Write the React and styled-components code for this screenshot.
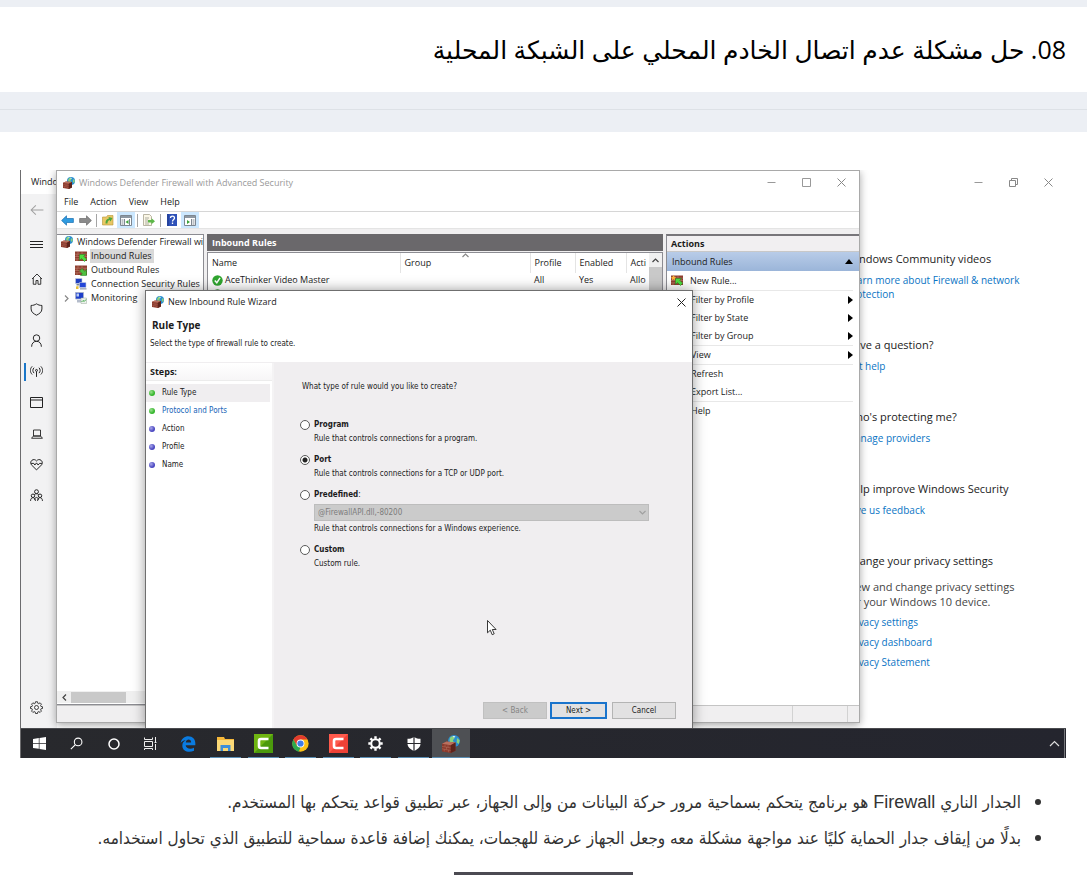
import React from "react";
import styled, { createGlobalStyle, css } from "styled-components";

const GlobalStyle = createGlobalStyle`
  *, *::before, *::after { box-sizing: border-box; }
  body { margin: 0; background: #fff; font-family: "DejaVu Sans", sans-serif; color: #000; }
  button, input, select { font: inherit; color: inherit; }
  h1, h2, h3, p, ul, ol { margin: 0; padding: 0; }
  ul, ol { list-style: none; }
  svg { display: block; flex: none; }
`;

const ui = '"Open Sans", "Noto Sans", sans-serif';
const dialogFont = '"DejaVu Sans Condensed", "DejaVu Sans", sans-serif';

/* ---------- article ---------- */

const Page = styled.div`
  direction: rtl;
  background: #fff;
`;
const TopStrip = styled.div`
  height: 7px;
  background: #eceff4;
`;
const Heading = styled.header`
  padding: 22px 21px 23px 20px;
  h1 {
    font-family: "Open Sans", "DejaVu Sans", sans-serif;
    font-size: 25px;
    line-height: 40px;
    font-weight: 400;
    white-space: nowrap;
  }
`;
const Divider = styled.div`
  height: 40px;
  padding-top: 17px;
  background: #eceff4;
  hr { margin: 0; border: 0; border-top: 1px solid #dde1e6; }
`;
const Article = styled.main`
  padding: 38px 21px 0 20px;
`;
const Notes = styled.ul`
  padding: 26px 0 0;
  color: #333;
  font-family: "DejaVu Sans Condensed", "DejaVu Sans", sans-serif;
  font-size: 17px;
  line-height: 36px;
  li {
    display: flex;
    align-items: center;
    gap: 14px;
    padding-right: 25px;
    height: 36px;
    white-space: nowrap;
  }
  li::before {
    content: "";
    width: 6px;
    height: 6px;
    border-radius: 50%;
    background: #333;
  }
  b { font: 400 18px/36px "Liberation Sans", sans-serif; }
`;
const NextFigure = styled.div`
  width: 179px;
  height: 3px;
  margin: 16px auto 0;
  background: #4b4a52;
`;

/* ---------- desktop ---------- */

const Desktop = styled.figure`
  direction: ltr;
  margin: 0;
  font-family: ${ui};
  font-size: 9px;
  line-height: 14px;
  color: #1b1b1b;
  border-left: 1px solid #6c6c6e;
  overflow: hidden;
`;
const Stage = styled.div`
  position: relative;
  height: 558px;
  overflow: hidden;
`;
const Security = styled.section`
  display: flex;
  flex-direction: column;
  height: 100%;
  background: #fff;
`;
const TitleBar = styled.div`
  display: flex;
  align-items: center;
  height: ${(p) => p.$h || 24}px;
  padding-left: ${(p) => p.$pad || 10}px;
  gap: 4px;
  color: ${(p) => (p.$muted ? "#9a9a9a" : "#1b1b1b")};
  white-space: nowrap;
`;
const WindowControls = styled.div`
  display: flex;
  margin-left: auto;
`;
const PlainButton = styled.button`
  display: flex;
  align-items: center;
  justify-content: center;
  padding: 0;
  border: 0;
  background: none;
`;
const ControlButton = styled(PlainButton)`
  width: ${(p) => p.$w || 35}px;
  height: 23px;
`;
const SecurityBody = styled.div`
  display: flex;
  flex: 1;
`;
const Sidebar = styled.nav`
  display: flex;
  flex-direction: column;
  width: 36px;
  background: #f2f2f3;
`;
const NavButton = styled(PlainButton)`
  height: ${(p) => p.$h || 31}px;
  padding-right: 7px;
  border-left: 2px solid transparent;
  ${(p) => p.$last && css`margin-top: auto;`}
  ${(p) =>
    p.$active &&
    css`
      background: linear-gradient(#1a76c8, #1a76c8) 1px center / 2px 18px no-repeat;
    `}
`;
const Help = styled.aside`
  display: flex;
  flex-direction: column;
  gap: 36px;
  width: 220px;
  margin-left: auto;
  padding-top: 57px;
`;
const HelpSection = styled.section`
  display: flex;
  flex-direction: column;
  align-items: flex-start;
  gap: 6px;
  h2 { font-size: 11px; line-height: 16px; font-weight: 400; }
  p { padding-top: 4px; font-size: 11px; line-height: 15px; color: #454545; }
  a { font-size: 10px; line-height: 14px; color: #0a74c4; text-decoration: none; }
`;

/* ---------- firewall console ---------- */

const Console = styled.section`
  position: absolute;
  left: 35px;
  top: 0;
  display: flex;
  flex-direction: column;
  width: 804px;
  height: 553px;
  background: #f0eff0;
  border: 1px solid #a9a9a9;
  box-shadow: 0 2px 8px rgba(0, 0, 0, 0.35);
`;
const WhiteBand = styled.div`
  background: #fff;
`;
const MenuBar = styled.div`
  display: flex;
  gap: 12px;
  height: 17px;
  padding-left: 7px;
  button { height: 16px; }
`;
const ToolBar = styled.div`
  display: flex;
  align-items: center;
  height: 18px;
  padding-left: 1px;
  border-top: 1px solid #d6d6d6;
  border-bottom: 1px solid #e4e4e4;
  background: #fff;
`;
const Tool = styled(PlainButton)`
  width: 18px;
  height: 16px;
  background: ${(p) => (p.$on ? "#cce8ff" : "none")};
`;
const ToolSep = styled.span`
  width: 1px;
  height: 13px;
  margin: 0 2px;
  background: #a5a5a5;
`;
const Panes = styled.div`
  display: flex;
  flex: 1;
  gap: 3px;
  min-height: 0;
  margin-top: 5px;
`;
const TreePane = styled.div`
  display: flex;
  flex-direction: column;
  width: 147px;
  background: #fff;
  border: 1px solid #8c8c92;
  border-left: 0;
  overflow: hidden;
`;
const TreeRow = styled.li`
  display: flex;
  align-items: center;
  gap: 4px;
  height: 14px;
  padding-left: ${(p) => p.$indent}px;
  white-space: nowrap;
  span { padding: 0 2px 0 1px; margin-left: -1px; background: ${(p) => (p.$on ? "#d9d9d9" : "none")}; }
`;
const Expander = styled.i`
  display: flex;
  width: 7px;
`;
const HScroll = styled.div`
  display: flex;
  align-items: center;
  height: 12px;
  margin: auto 0 1px;
  padding-left: 5px;
  background: #f0f0f0;
  gap: 4px;
  &::after { content: ""; width: 55px; height: 11px; background: #c9c9c9; }
`;
const ListPane = styled.div`
  display: flex;
  flex-direction: column;
  width: 456px;
  h2 {
    height: 17px;
    padding-left: 5px;
    line-height: 17px;
    font-size: 9px;
    color: #fff;
    background: #6a686b;
  }
`;
const ListBox = styled.div`
  display: flex;
  flex: 1;
  margin-top: 1px;
  border: 1px solid #8c8c92;
  background: #fff;
  overflow: hidden;
`;
const RuleTable = styled.table`
  flex: 1;
  align-self: flex-start;
  table-layout: fixed;
  border-collapse: collapse;
  width: 0;
  th, td { padding: 0 0 0 4px; text-align: left; font-weight: 400; white-space: nowrap; }
  th { height: 20px; border-right: 1px solid #e4e4e4; }
  th:last-child { border-right: 0; }
  td { height: 14px; }
`;
const SortHead = styled.div`
  position: relative;
  svg { position: absolute; right: 61px; top: -3px; }
`;
const RuleName = styled.div`
  display: flex;
  align-items: center;
  gap: 2px;
`;
const VScroll = styled.div`
  width: 13px;
  padding-top: 5px;
  background: linear-gradient(#f0f0f0 14px, #c9c9c9 14px);
  svg { margin: 0 auto; }
`;
const ActionsPane = styled.div`
  flex: 1;
  border-top: 2px solid #77757a;
  border-left: 1px solid #8c8c92;
  background: #fff;
  h2 {
    height: 16px;
    padding-left: 4px;
    font-size: 9px;
    line-height: 15px;
    background: #f1eff1;
    border-bottom: 1px solid #c8c8c8;
  }
`;
const ActionHeader = styled.button`
  display: flex;
  align-items: center;
  justify-content: space-between;
  width: 100%;
  height: 19px;
  padding: 0 6px 0 5px;
  border: 0;
  background: linear-gradient(#b8cce8, #9bb5d9);
`;
const ActionRow = styled.li`
  border-bottom: ${(p) => (p.$rule ? 1 : 0)}px solid #e8e8e8;
  margin-right: 6px;
  button {
    justify-content: flex-start;
    width: 100%;
    height: ${(p) => (p.$icon ? 19 : 18)}px;
    padding-left: ${(p) => (p.$icon ? 4 : 24)}px;
    gap: 7px;
  }
  svg:last-child:not(:first-child) { margin-left: auto; }
`;
const StatusBar = styled.div`
  display: flex;
  justify-content: flex-end;
  height: 17px;
  border-top: 1px solid #c4c4c4;
  span { width: 55px; border-left: 1px solid #d2d2d2; }
  span:last-child { width: 12px; }
`;

/* ---------- wizard dialog ---------- */

const Wizard = styled.form`
  position: absolute;
  left: 124px;
  top: 120px;
  display: flex;
  flex-direction: column;
  width: 548px;
  height: 438px;
  background: #fff;
  border: 1px solid #6f6f6f;
  border-bottom: 0;
  box-shadow: 0 0 12px rgba(0, 0, 0, 0.4);
  font-family: ${dialogFont};
  font-size: 8px;
`;
const WizardTitle = styled(TitleBar)`
  font-family: ${ui};
  font-size: 9px;
`;
const WizardIntro = styled.div`
  height: 49px;
  padding: 5px 4px 0;
  h2 { padding-left: 2px; font: 700 10px/14px ${ui}; }
  p { padding-top: 5px; }
`;
const WizardBody = styled.div`
  display: flex;
  flex: 1;
  border-top: 1px solid #f0eef0;
`;
const Steps = styled.div`
  width: 128px;
  border-right: 2px solid #f4f3f4;
  h3 {
    height: 18px;
    padding-left: 4px;
    margin-bottom: 3px;
    font: 700 9px/17px ${ui};
    border-bottom: 1px solid #ececec;
    background: linear-gradient(#fff, #f7f6f7);
  }
`;
const Step = styled.li`
  display: flex;
  align-items: center;
  gap: 7px;
  height: 18px;
  padding-left: 3px;
  margin-right: 2px;
  background: ${(p) => (p.$on ? "#f0eef0" : "none")};
  &::before {
    content: "";
    width: 6px;
    height: 6px;
    border-radius: 50%;
    background: radial-gradient(circle at 35% 35%, ${(p) => (p.$done ? "#9be08f, #35b52c" : "#a9a7ea, #4a47c0")} 60%);
  }
  a { color: #1765b8; text-decoration: none; }
`;
const Question = styled.div`
  display: flex;
  flex-direction: column;
  flex: 1;
  padding: 17px 16px 9px 28px;
  background: #f0eef0;
`;
const Options = styled.fieldset`
  display: flex;
  flex-direction: column;
  margin: 0;
  padding: 0;
  border: 0;
  legend { padding: 0; margin-bottom: 24px; }
`;
const Option = styled.div`
  margin-bottom: 8px;
  margin-left: -2px;
  label { display: flex; align-items: center; gap: 4px; font-weight: 700; }
  label span { font-weight: 400; margin-left: -4px; }
  input {
    appearance: none;
    width: 10px;
    height: 10px;
    margin: 0;
    border: 1px solid #5a5a5a;
    border-radius: 50%;
    background: #fff;
  }
  input:checked { background: radial-gradient(circle, #222 0 2px, #fff 3px); }
  p { padding-left: 14px; line-height: 13px; }
`;
const SelectBox = styled.div`
  position: relative;
  margin: 2px 27px 1px 14px;
  select {
    appearance: none;
    display: block;
    width: 100%;
    height: 17px;
    padding: 0 3px;
    border: 1px solid #bdbdbd;
    border-radius: 0;
    background: #cbcbcb;
    color: #7c7c7c;
    opacity: 1;
  }
  svg { position: absolute; right: 3px; top: 6px; }
`;
const Buttons = styled.div`
  display: flex;
  justify-content: flex-end;
  margin-top: auto;
  gap: 3px;
`;
const DialogButton = styled.button`
  width: ${(p) => (p.$primary ? 57 : 64)}px;
  height: 17px;
  padding: 0;
  border: ${(p) => (p.$primary ? "2px solid #1a74cc" : "1px solid #b4b4b4")};
  background: #e2e1e2;
  &:disabled { background: #cbcbcb; border-color: #c0c0c0; color: #858585; }
  &:last-child { margin-left: 2px; }
`;
const Pointer = styled.div`
  position: absolute;
  left: 466px;
  top: 450px;
`;

/* ---------- taskbar ---------- */

const TaskBar = styled.div`
  display: flex;
  height: 30px;
  background: linear-gradient(90deg, #28292d, #24252e);
  border-top: 1px solid #4a4b4f;
`;
const TaskGroup = styled.div`
  display: flex;
  width: ${(p) => p.$w}px;
`;
const Task = styled(PlainButton)`
  flex: 1;
  color: #fff;
  background: ${(p) => (p.$active ? "#4e5054" : "none")};
  ${(p) =>
    p.$open &&
    css`
      background-image: linear-gradient(#5b8fb5, #5b8fb5);
      background-size: ${p.$active ? "100%" : "31px"} 1px;
      background-position: center bottom;
      background-repeat: no-repeat;
    `}
`;
const Tray = styled.div`
  display: flex;
  margin-left: auto;
  margin-right: 1px;
  padding-right: 4px;
  border-right: 1px solid #77787c;
`;

/* ---------- icons ---------- */

const Svg = ({ w = 12, h = w, vb = "0 0 12 12", children, ...rest }) => (
  <svg width={w} height={h} viewBox={vb} fill="none" aria-hidden="true" {...rest}>
    {children}
  </svg>
);
const Line = ({ size = 12, vb = "0 0 24 24", sw = 1.8, color = "#222", children }) => (
  <Svg w={size} vb={vb} stroke={color} strokeWidth={sw}>{children}</Svg>
);
const Min = ({ c = "#999" }) => <Svg w={9} vb="0 0 9 9" stroke={c}><path d="M.5 4.5h8" /></Svg>;
const Max = ({ c = "#999" }) => <Svg w={9} vb="0 0 9 9" stroke={c}><path d="M.5.5h8v8h-8z" /></Svg>;
const Restore = ({ c = "#888" }) => (
  <Svg w={9} vb="0 0 9 9" stroke={c}><path d="M.5 2.5h6v6h-6zM2.5 2.5v-2h6v6h-2" /></Svg>
);
const Close = ({ c = "#888" }) => <Svg w={9} vb="0 0 9 9" stroke={c}><path d="M.5.5l8 8M8.5.5l-8 8" /></Svg>;

const Wall = ({ size = 12 }) => (
  <Svg w={size}>
    <circle cx="8" cy="4" r="4" fill="#2b8ed0" />
    <path d="M6 1.2c2-1 3 .3 2 1.5S7 4 8.5 5l-2 1.5C5 5 4.5 2.5 6 1.2zM10 2l1.8 1.5-.6 2.5-1.4-1z" fill="#8ad27c" />
    <path d="M7 .7l2 .2-1 1z" fill="#e7f6ff" />
    <path d="M0 5.8l3-1.400L9 5v5.500L5.800 12 0 11z" fill="#8c3a2c" />
    <path d="M0 5.800l3-1.400L9 5 5.800 6.800z" fill="#b8705f" />
    <path d="M5.800 6.800L9 5v5.500L5.800 12z" fill="#5d231b" />
    <path d="M0 7.600l5.800 1M0 9.200l5.800 1.100M2 6.400v1.500M4 6.800v1.500M3 8v1.600M1.500 9.400v1.500M4.300 10v1.500" stroke="#b87868" strokeWidth=".3" />
  </Svg>
);
const RuleIcon = ({ out, star }) => (
  <Svg w={12} h={11} vb="0 0 12 11">
    <path d="M0 .5h12V10H0z" fill="#8e3f30" />
    <path d="M0 3.200h12M0 5.500h12M0 7.800h12M3 1v2.200M7 1v2.200M2 3.200v2.300M5 5.500v2.300M2 7.800V10M10 3.200v2.300" stroke="#c98c7a" strokeWidth=".5" />
    {out ? (
      <path d="M11.500 10.500H5.500l1.800-1.800L4.500 6l2.500-2.500L9.800 6.300l1.700-1.800z" fill="#4fc040" stroke="#1f7a1a" strokeWidth=".5" />
    ) : (
      <path d="M4.500 3.500h6L8.700 5.200l3 3-2.200 2.300-3-3L4.500 9.500z" fill="#4fdc40" stroke="#1f7a1a" strokeWidth=".5" />
    )}
    {star && <path d="M2.500 0l.8 1.700 1.900.3-1.400 1.300.3 1.900-1.600-.9-1.700.9.3-1.900L0 2l1.800-.3z" fill="#ffb63a" />}
  </Svg>
);
const Computers = () => (
  <Svg>
    <path d="M.5.5h6.500v5H.5z" fill="#1f3fc0" stroke="#c8cfdd" strokeWidth=".6" />
    <path d="M1.500 6h4v1.500h-4z" fill="#7b8595" />
    <path d="M4.500 4.500h6.500V9.500H4.500z" fill="#2547d8" stroke="#c8cfdd" strokeWidth=".6" />
    <path d="M5 10h6.500v1.600H5z" fill="#a9b2c0" />
    <path d="M1 8.500l2.500-.5v3H1z" fill="#e8c03a" />
  </Svg>
);
const Monitor = () => (
  <Svg>
    <path d="M.5.5h8v6.500h-8z" fill="#1e3fca" stroke="#a8b2c8" strokeWidth=".8" />
    <path d="M1.500 1.500h2.500v3H1.500z" fill="#b9cdf5" />
    <path d="M2 8h6v2.500H2z" fill="#b4bccb" />
    <path d="M6 6h5.500v5.500H6z" fill="#eef3ee" stroke="#9aa89a" strokeWidth=".5" />
    <path d="M6.500 10l1.500-1.500 1.200 1L11 7.500" stroke="#2f9e35" strokeWidth=".9" />
  </Svg>
);
const Check = () => (
  <Svg w={11} vb="0 0 11 11">
    <circle cx="5.5" cy="5.5" r="5.2" fill="#2fa52f" />
    <path d="M2.800 5.500l2 2.300 3.200-5" stroke="#fff" strokeWidth="1.5" />
  </Svg>
);
const Arrow = ({ back }) => (
  <Svg w={13} h={11} vb="0 0 13 11">
    {back ? (
      <path d="M.6 5.500L5.500.8v2.700h6.900v4H5.500v2.700z" fill="#2f9be0" stroke="#1a6fb0" strokeWidth=".7" />
    ) : (
      <path d="M12.400 5.500L7.500.8v2.700H.6v4h6.900v2.700z" fill="#8b8b8b" stroke="#6a6a6a" strokeWidth=".7" />
    )}
  </Svg>
);
const FolderUp = () => (
  <Svg>
    <path d="M.5 3h4l1-1.500h5.500v9.500H.5z" fill="#e8c765" stroke="#b79535" strokeWidth=".6" />
    <path d="M3.500 9.500c0-3 1-4.500 3.500-5L6.500 3l4 1-2 3.500-.8-1.500C6 6.500 5.500 7.500 5.500 9.500z" fill="#4da53c" />
  </Svg>
);
const PaneIcon = ({ right }) => (
  <Svg h={11} vb="0 0 12 11">
    <path d="M.5.5h11v10H.5z" fill="#fff" stroke="#7d8791" />
    <path d="M1 1h10v2H1z" fill="#8d98a3" />
    <path d={right ? "M7.500 4v6M8.500 5h2M8.500 7h2M8.500 9h2" : "M4.500 4v6M1.500 5h2M1.500 7h2M1.500 9h2M9.500 4v6"} stroke="#7d8791" />
    <path d={right ? "M3 5l3 2-3 2z" : "M8.500 5L5.500 7l3 2z"} fill="#3da33a" />
  </Svg>
);
const ExportIcon = () => (
  <Svg>
    <path d="M.5.5h6l2 2V11.500h-8z" fill="#fbf7e6" stroke="#a8a48f" strokeWidth=".8" />
    <path d="M2 4h4M2 6h3M2 8h3M2 10h4" stroke="#8c8c84" strokeWidth=".7" />
    <path d="M5 6h3.500V4.200L12 7.200 8.500 10.200V8.500H5z" fill="#5cb848" />
  </Svg>
);
const HelpIcon = () => (
  <Svg w={10} h={12} vb="0 0 10 12">
    <path d="M0 0h10v12H0z" fill="#2f52b8" />
    <path d="M1 0v12" stroke="#1c3585" />
    <path d="M3.500 4c0-2.500 4-2.500 4 0 0 1.500-2 1.500-2 3.500M5.500 8.600v1.500" stroke="#fff" strokeWidth="1.3" />
  </Svg>
);
const TriRight = () => <Svg w={5} h={8} vb="0 0 5 8"><path d="M0 0l5 4-5 4z" fill="#000" /></Svg>;
const TriUp = () => <Svg w={8} h={5} vb="0 0 8 5"><path d="M0 5l4-5 4 5z" fill="#000" /></Svg>;
const Chevron = ({ d, c = "#444", w = 7, h = 5 }) => (
  <Svg w={w} h={h} vb={`0 0 ${w} ${h}`} stroke={c} strokeWidth="1.2"><path d={d} /></Svg>
);

const BackArrow = () => <Line size={14} color="#a0a0a0"><path d="M23 12H2M10 4l-8 8 8 8" /></Line>;
const Burger = () => <Line size={13} vb="0 0 13 13" sw={1}><path d="M0 3.500h13M0 6.500h13M0 9.500h13" /></Line>;
const Home = () => <Line><path d="M2 12L12 2l10 10M4.500 10v12.500H10V15h4v7.500h5.500V10" /></Line>;
const Shield = () => <Line size={13}><path d="M12 1.500c3 2 6 3 10 3V11c0 6-5 9-10 11.500C7 20 2 17 2 11V4.500c4 0 7-1 10-3z" /></Line>;
const User = () => <Line size={13}><circle cx="12" cy="7.500" r="6" /><path d="M3 23.500c0-6 3.500-10 9-10s9 4 9 10" /></Line>;
const Signal = () => (
  <Line size={13}>
    <circle cx="12" cy="10" r="1.800" /><path d="M12 12v10M7.500 5c-3 3-3 7 0 10M16.500 5c3 3 3 7 0 10M4 2.500c-4.500 5-4.500 10 0 15M20 2.500c4.500 5 4.500 10 0 15" />
  </Line>
);
const AppWindow = () => <Line size={13} vb="0 0 13 13" sw={1}><path d="M.5 1.500h12v10H.5zM.5 4h12" /></Line>;
const Laptop = () => <Line><path d="M5 4h14v12H5zM1 20.500h22L19 16H5z" /></Line>;
const Heart = () => (
  <Line size={13}><path d="M12 22L2.500 12.500C-2 6 7-1 12 5.500 17-1 26 6 21.500 12.500zM2 10h5l2 3 3-4 3 4 2.500-3H22" /></Line>
);
const Family = () => (
  <Line size={13}>
    <circle cx="12" cy="5" r="3.600" /><circle cx="5.500" cy="12.500" r="3.200" /><circle cx="18.500" cy="12.500" r="3.200" />
    <path d="M1 22c0-8 9-8 9 0M14 22c0-8 9-8 9 0M8 10.500c2-2.500 6-2.500 8 0M8.500 20c0-6 7-6 7 0" />
  </Line>
);
const gearPath = "M10 1.500h4l.6 3.100 1.900.8 2.700-1.800 2.700 2.700-1.800 2.700.8 1.900 3.100.6v3.500l-3.100.6-.8 1.900 1.800 2.700-2.700 2.700-2.700-1.800-1.900.8-.6 3.100h-4l-.6-3.100-1.900-.8-2.700 1.800-2.700-2.700 1.800-2.700-.8-1.900L0 15v-3.500l3.100-.6.8-1.900-1.800-2.700 2.700-2.700 2.700 1.800 1.900-.8z";
const Gear = () => <Line size={13} vb="-1 0 26 26" sw={1.7}><path d={gearPath} /><circle cx="12" cy="13" r="4" /></Line>;

const StartIcon = () => (
  <Svg w={13} vb="0 0 13 13"><path d="M0 2l5.800-.9v5H0zM6.500 1L13 0v6.100H6.500zM0 6.800h5.800v5L0 11zM6.500 6.800H13V13l-6.500-1z" fill="#fff" /></Svg>
);
const SearchIcon = () => <Svg w={13} stroke="#fff"><circle cx="7.500" cy="4.500" r="3.500" /><path d="M5 7L.8 11.300" /></Svg>;
const CortanaIcon = () => <Svg stroke="#fff" strokeWidth="1.500"><circle cx="6" cy="6" r="5" /></Svg>;
const TaskViewIcon = () => (
  <Svg w={13} vb="0 0 13 13" stroke="#eee"><path d="M.5.5v2h8v-2M.5 4.500h8v5h-8zM.5 13v-1.500h8V13M11.500 0v5M11.500 7v6M10.500 5.500h2" /></Svg>
);
const EdgeIcon = () => (
  <Svg w={16} vb="0 0 24 24">
    <path d="M1 10.500C2 4 7 .5 12.500.5 19 .5 23 5 23 11v3H8.500c.5 5 7.500 6.500 12.500 3.500v4.700C12.500 26 3.500 22.500 3.500 14.500c0-4 2-6.500 5-8C4.500 7 2.500 8.500 1 10.500zM8.700 9.700h8C16.700 4 9.500 4 8.700 9.700z" fill="#0a7be0" />
  </Svg>
);
const FolderIcon = () => (
  <Svg w={17} h={14} vb="0 0 17 14">
    <path d="M0 0h7l1 2h9v12H0z" fill="#f6b83a" /><path d="M0 3h17v11H0z" fill="#fbd977" />
    <path d="M3.500 14V8h10v6H11v-3H6v3z" fill="#3e8fd8" />
  </Svg>
);
const Camtasia = ({ from, to }) => (
  <Svg w={19} vb="0 0 19 19">
    <path d="M0 0h19v19H0z" fill={from} /><path d="M0 19L19 0v19z" fill={to} />
    <path d="M14.500 5H7C5.500 5 5 5.500 5 7v5c0 1.500.5 2 2 2h7.500" stroke="#fff" strokeWidth="2.600" />
  </Svg>
);
const ChromeIcon = () => (
  <Svg w={17} vb="0 0 24 24">
    <circle cx="12" cy="12" r="11.500" fill="#fbc116" />
    <path d="M2 6.200A11.500 11.500 0 0 1 22 6.500H12L7 15z" fill="#e33b2e" />
    <path d="M2 6.200l5 8.800 5 2.500-2.500 6A11.500 11.500 0 0 1 2 6.200z" fill="#2da94f" />
    <circle cx="12" cy="12" r="5.500" fill="#fff" /><circle cx="12" cy="12" r="4.400" fill="#3f7de8" />
  </Svg>
);
const SettingsIcon = () => (
  <Svg w={15} vb="0 0 24 24">
    <circle cx="12" cy="12" r="6.800" stroke="#fff" strokeWidth="3.200" />
    <path d="M12 .5v4M12 19.500v4M.5 12h4M19.500 12h4M3.900 3.900l2.800 2.800M17.300 17.300l2.800 2.800M3.900 20.100l2.800-2.800M17.300 6.700l2.800-2.800" stroke="#fff" strokeWidth="3.800" />
  </Svg>
);
const DefenderIcon = () => (
  <Svg w={14} vb="0 0 14 14">
    <path d="M7 0c2 1.300 4 1.800 6.500 1.800V6.500c0 4-3.500 6-6.500 7.500C4 12.500.5 10.500.5 6.500V1.800C3 1.800 5 1.300 7 0z" fill="#fff" />
    <path d="M7 0v14M0 6.500h14" stroke="#28292d" strokeWidth="1.200" />
  </Svg>
);

/* ---------- data ---------- */

const nav = [
  ["Home", Home], ["Virus protection", Shield], ["Account protection", User], ["Firewall", Signal],
  ["App control", AppWindow], ["Device security", Laptop], ["Device health", Heart], ["Family options", Family],
];
const help = [
  { title: "Windows Community videos", links: [<>Learn more about Firewall &amp; network<br />protection</>] },
  { title: "Have a question?", links: ["Get help"] },
  { title: "Who's protecting me?", links: ["Manage providers"] },
  { title: "Help improve Windows Security", links: ["Give us feedback"] },
  {
    title: "Change your privacy settings",
    text: <>View and change privacy settings<br />for your Windows 10 device.</>,
    links: ["Privacy settings", "Privacy dashboard", "Privacy Statement"],
  },
];
const actions = [
  { text: "New Rule...", icon: true, rule: true },
  { text: "Filter by Profile", sub: true }, { text: "Filter by State", sub: true },
  { text: "Filter by Group", sub: true, rule: true }, { text: "View", sub: true, rule: true },
  { text: "Refresh" }, { text: "Export List...", rule: true }, { text: "Help" },
];
const openApps = [
  ["File Explorer", <FolderIcon />],
  ["Camtasia", <Camtasia from="#6fb512" to="#4b9a0c" />],
  ["Chrome", <ChromeIcon />],
  ["Camtasia Recorder", <Camtasia from="#ff5a4c" to="#ee4136" />],
  ["Settings", <SettingsIcon />],
  ["Windows Security", <DefenderIcon />],
];

function SecurityWindow() {
  return (
    <Security>
      <TitleBar>
        Windows
        <WindowControls>
          <ControlButton aria-label="Minimize"><Min /></ControlButton>
          <ControlButton aria-label="Restore"><Restore /></ControlButton>
          <ControlButton aria-label="Close"><Close /></ControlButton>
        </WindowControls>
      </TitleBar>
      <SecurityBody>
        <Sidebar>
          <NavButton $h={32} aria-label="Back"><BackArrow /></NavButton>
          <NavButton $h={37} aria-label="Menu"><Burger /></NavButton>
          {nav.map(([label, Icon]) => (
            <NavButton key={label} aria-label={label} $active={label === "Firewall"}><Icon /></NavButton>
          ))}
          <NavButton $h={42} $last aria-label="Settings"><Gear /></NavButton>
        </Sidebar>
        <Help>
          {help.map((s) => (
            <HelpSection key={s.title}>
              <h2>{s.title}</h2>
              {s.text && <p>{s.text}</p>}
              {s.links.map((l, i) => <a key={i} href="#help">{l}</a>)}
            </HelpSection>
          ))}
        </Help>
      </SecurityBody>
    </Security>
  );
}

function FirewallConsole() {
  return (
    <Console>
      <WhiteBand>
        <TitleBar $muted $pad={6} $h={23}>
          <Wall /> Windows Defender Firewall with Advanced Security
          <WindowControls>
            <ControlButton aria-label="Minimize"><Min /></ControlButton>
            <ControlButton aria-label="Maximize"><Max /></ControlButton>
            <ControlButton aria-label="Close"><Close /></ControlButton>
          </WindowControls>
        </TitleBar>
        <MenuBar>
          {["File", "Action", "View", "Help"].map((m) => <PlainButton key={m}>{m}</PlainButton>)}
        </MenuBar>
      </WhiteBand>
      <ToolBar>
        <Tool aria-label="Back"><Arrow back /></Tool>
        <Tool aria-label="Forward"><Arrow /></Tool>
        <ToolSep />
        <Tool aria-label="Up"><FolderUp /></Tool>
        <Tool $on aria-label="Show tree"><PaneIcon /></Tool>
        <ToolSep />
        <Tool aria-label="Export"><ExportIcon /></Tool>
        <ToolSep />
        <Tool aria-label="Help"><HelpIcon /></Tool>
        <Tool $on aria-label="Show actions"><PaneIcon right /></Tool>
      </ToolBar>
      <Panes>
        <TreePane>
          <ul>
            <TreeRow $indent={4}><Wall /><span>Windows Defender Firewall with</span></TreeRow>
            <TreeRow $indent={18} $on><RuleIcon /><span>Inbound Rules</span></TreeRow>
            <TreeRow $indent={18}><RuleIcon out /><span>Outbound Rules</span></TreeRow>
            <TreeRow $indent={18}><Computers /><span>Connection Security Rules</span></TreeRow>
            <TreeRow $indent={7}>
              <Expander><Chevron w={5} h={7} d="M1 .5l3 3-3 3" c="#888" /></Expander>
              <Monitor /><span>Monitoring</span>
            </TreeRow>
          </ul>
          <HScroll><Chevron w={5} h={7} d="M4 .5l-3 3 3 3" /></HScroll>
        </TreePane>
        <ListPane>
          <h2>Inbound Rules</h2>
          <ListBox>
            <RuleTable>
              <colgroup>
                <col style={{ width: 192 }} /><col style={{ width: 130 }} /><col style={{ width: 45 }} /><col style={{ width: 51 }} /><col />
              </colgroup>
              <thead>
                <tr>
                  <th>Name</th>
                  <th><SortHead>Group<Chevron d="M.5 4l3-3 3 3" c="#888" /></SortHead></th>
                  <th>Profile</th><th>Enabled</th><th>Acti</th>
                </tr>
              </thead>
              <tbody>
                <tr><td><RuleName><Check />AceThinker Video Master</RuleName></td><td /><td>All</td><td>Yes</td><td>Allo</td></tr>
                <tr><td><RuleName><Check /></RuleName></td><td /><td /><td /><td /></tr>
              </tbody>
            </RuleTable>
            <VScroll><Chevron d="M.5 4l3-3 3 3" /></VScroll>
          </ListBox>
        </ListPane>
        <ActionsPane>
          <h2>Actions</h2>
          <ActionHeader type="button">Inbound Rules<TriUp /></ActionHeader>
          <ul>
            {actions.map((a) => (
              <ActionRow key={a.text} $rule={a.rule} $icon={a.icon}>
                <PlainButton>
                  {a.icon && <RuleIcon star />}
                  <span>{a.text}</span>
                  {a.sub && <TriRight />}
                </PlainButton>
              </ActionRow>
            ))}
          </ul>
        </ActionsPane>
      </Panes>
      <StatusBar><span /><span /></StatusBar>
    </Console>
  );
}

function RuleWizard() {
  return (
    <Wizard onSubmit={(e) => e.preventDefault()}>
      <WizardTitle $pad={6} $h={22}>
        <Wall /> New Inbound Rule Wizard
        <WindowControls>
          <ControlButton type="button" $w={22} aria-label="Close"><Close c="#222" /></ControlButton>
        </WindowControls>
      </WizardTitle>
      <WizardIntro>
        <h2>Rule Type</h2>
        <p>Select the type of firewall rule to create.</p>
      </WizardIntro>
      <WizardBody>
        <Steps>
          <h3>Steps:</h3>
          <ol>
            <Step $on $done>Rule Type</Step>
            <Step $done><a href="#ports">Protocol and Ports</a></Step>
            <Step>Action</Step>
            <Step>Profile</Step>
            <Step>Name</Step>
          </ol>
        </Steps>
        <Question>
          <Options>
            <legend>What type of rule would you like to create?</legend>
            <Option>
              <label><input type="radio" name="rule" />Program</label>
              <p>Rule that controls connections for a program.</p>
            </Option>
            <Option>
              <label><input type="radio" name="rule" defaultChecked />Port</label>
              <p>Rule that controls connections for a TCP or UDP port.</p>
            </Option>
            <Option>
              <label><input type="radio" name="rule" />Predefined<span>:</span></label>
              <SelectBox>
                <select disabled aria-label="Predefined rule"><option>@FirewallAPI.dll,-80200</option></select>
                <Chevron d="M.5 1l3 3 3-3" c="#a0a0a0" />
              </SelectBox>
              <p>Rule that controls connections for a Windows experience.</p>
            </Option>
            <Option>
              <label><input type="radio" name="rule" />Custom</label>
              <p>Custom rule.</p>
            </Option>
          </Options>
          <Buttons>
            <DialogButton type="button" disabled>&lt; Back</DialogButton>
            <DialogButton $primary>Next &gt;</DialogButton>
            <DialogButton type="button">Cancel</DialogButton>
          </Buttons>
        </Question>
      </WizardBody>
    </Wizard>
  );
}

export default function App() {
  return (
    <>
      <GlobalStyle />
      <Page lang="ar">
        <TopStrip />
        <Heading><h1>08. حل مشكلة عدم اتصال الخادم المحلي على الشبكة المحلية</h1></Heading>
        <Divider><hr /></Divider>
        <Article>
          <Desktop lang="en">
            <Stage>
              <SecurityWindow />
              <FirewallConsole />
              <RuleWizard />
              <Pointer>
                <Svg w={10} h={16} vb="0 0 10 16">
                  <path d="M.5.5v12.300l2.800-2.600 1.900 4.500 2-.9-1.900-4.300h3.800z" fill="#fff" stroke="#222" strokeWidth=".9" />
                </Svg>
              </Pointer>
            </Stage>
            <TaskBar>
              <TaskGroup $w={148}>
                <Task aria-label="Start"><StartIcon /></Task>
                <Task aria-label="Search"><SearchIcon /></Task>
                <Task aria-label="Cortana"><CortanaIcon /></Task>
                <Task aria-label="Task view"><TaskViewIcon /></Task>
              </TaskGroup>
              <TaskGroup $w={301}>
                <Task aria-label="Edge"><EdgeIcon /></Task>
                {openApps.map(([label, icon]) => <Task key={label} $open aria-label={label}>{icon}</Task>)}
                <Task $open $active aria-label="Firewall"><Wall size={18} /></Task>
              </TaskGroup>
              <Tray>
                <PlainButton aria-label="Hidden icons"><Chevron w={11} h={7} d="M1 6l4.500-4.500L10 6" c="#ddd" /></PlainButton>
              </Tray>
            </TaskBar>
          </Desktop>
          <Notes>
            <li><span>الجدار الناري <b>Firewall</b> هو برنامج يتحكم بسماحية مرور حركة البيانات من وإلى الجهاز، عبر تطبيق قواعد يتحكم بها المستخدم.</span></li>
            <li><span>بدلًا من إيقاف جدار الحماية كليًا عند مواجهة مشكلة معه وجعل الجهاز عرضة للهجمات، يمكنك إضافة قاعدة سماحية للتطبيق الذي تحاول استخدامه.</span></li>
          </Notes>
          <NextFigure />
        </Article>
      </Page>
    </>
  );
}
